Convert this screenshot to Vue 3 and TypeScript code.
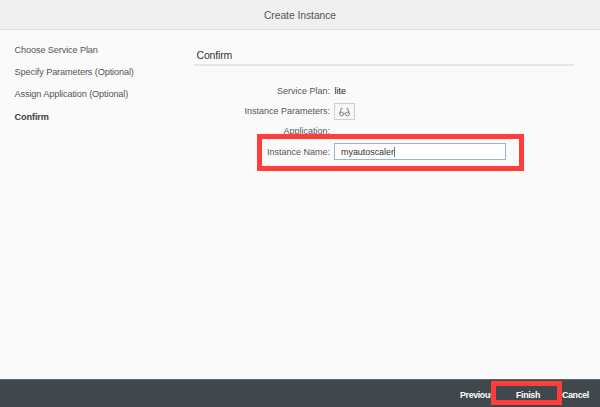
<script setup lang="ts">
import { ref } from 'vue'

interface Step {
  label: string
  active?: boolean
}

const steps: Step[] = [
  { label: 'Choose Service Plan' },
  { label: 'Specify Parameters (Optional)' },
  { label: 'Assign Application (Optional)' },
  { label: 'Confirm', active: true },
]
const instanceName = ref('myautoscaler')
</script>

<template>
  <div class="dialog">
    <header class="header">Create Instance</header>
    <div class="body">
      <nav class="steps">
        <div v-for="step in steps" :key="step.label" class="step" :class="{ active: step.active }">
          {{ step.label }}
        </div>
      </nav>
      <main class="content">
        <h2 class="title">Confirm</h2>
        <div class="form">
          <div class="row">
            <span class="label">Service Plan:</span>
            <span class="value">lite</span>
          </div>
          <div class="row">
            <span class="label">Instance Parameters:</span>
            <button class="view" aria-label="View parameters">
              <svg width="11" height="10" viewBox="0 0 11 10" fill="none" stroke="#777" stroke-width="0.9">
                <circle cx="2.6" cy="7" r="1.9" />
                <circle cx="8.4" cy="7" r="1.9" />
                <path d="M4.4 6.7Q5.5 6 6.6 6.7M0.8 6.4L2.1 1.5Q2.7 0.9 3.7 1.8M10.2 6.4L8.9 1.5Q8.3 0.9 7.3 1.8" />
              </svg>
            </button>
          </div>
          <div class="row application">
            <span class="label">Application:</span>
          </div>
          <div class="row name">
            <span class="label">Instance Name:</span>
            <div class="input"><span>{{ instanceName }}</span><i class="caret"></i></div>
            <div class="mark mark-name"></div>
          </div>
        </div>
      </main>
    </div>
    <footer class="footer">
      <span class="action previous">Previous</span>
      <span class="action finish">Finish<i class="mark mark-finish"></i></span>
      <span class="action cancel">Cancel</span>
    </footer>
  </div>
</template>

<style>
body {
  background: #fafafa;
}
</style>

<style scoped>
.dialog {
  box-sizing: border-box;
  width: 600px;
  height: 407px;
  display: flex;
  flex-direction: column;
  overflow: hidden;
  background: #fafafa;
  color: #555;
  font: 9px/12px "Liberation Sans", Arial, sans-serif;
}
.header {
  box-sizing: border-box;
  height: 30px;
  flex: none;
  background: #f0f0f0;
  border-bottom: 1px solid #dfdfdf;
  text-align: center;
  font-size: 10.3px;
  line-height: 31px;
  letter-spacing: -0.04px;
}
.body {
  flex: 1;
  display: flex;
}
.steps {
  width: 194px;
  box-sizing: border-box;
  padding: 9px 0 0 14.5px;
  font-size: 9.2px;
  letter-spacing: -0.13px;
}
.step {
  height: 22.2px;
  line-height: 22px;
  white-space: nowrap;
}
.active {
  font-weight: bold;
  color: #444;
}
.content {
  width: 380px;
}
.title {
  box-sizing: border-box;
  margin: 0;
  height: 36px;
  padding: 14px 0 0 2.5px;
  border-bottom: 2px solid #e5e5e5;
  font-size: 10.5px;
  line-height: 22px;
  font-weight: normal;
  letter-spacing: -0.16px;
  color: #333;
}
.form {
  padding-top: 15px;
}
.row {
  position: relative;
  height: 20px;
  display: flex;
  align-items: center;
}
.label {
  width: 136px;
  margin-right: 4.5px;
  text-align: right;
  white-space: nowrap;
}
.value {
  color: #222;
}
.view {
  box-sizing: border-box;
  width: 21px;
  height: 17px;
  margin: 0 0 0 -0.5px;
  padding: 2px 0 0;
  display: flex;
  align-items: center;
  justify-content: center;
  background: #f7f7f7;
  border: 1px solid #cfcfcf;
}
.name {
  height: 21px;
}
.input {
  box-sizing: border-box;
  width: 172px;
  height: 17px;
  margin-left: -0.5px;
  padding-left: 6px;
  display: flex;
  align-items: center;
  background: #fff;
  border: 1px solid #9bb4d6;
  color: #333;
  letter-spacing: -0.05px;
}
.caret {
  width: 1px;
  height: 10px;
  background: #777;
}
.mark {
  position: absolute;
  box-sizing: border-box;
  border: 5px solid #ff3d3a;
}
.mark-name {
  left: 63px;
  top: -7px;
  width: 267px;
  height: 37px;
}
.footer {
  box-sizing: border-box;
  height: 28px;
  flex: none;
  display: flex;
  background: #3f484c;
  border-top: 1px solid #59676b;
  color: #fff;
  font-size: 8.8px;
  font-weight: bold;
  letter-spacing: -0.33px;
  line-height: 31px;
}
.action {
  white-space: nowrap;
}
.previous {
  width: 31px;
  padding-left: 460px;
}
.finish {
  position: relative;
  width: 71px;
  box-sizing: border-box;
  padding-left: 25px;
}
.mark-finish {
  left: 0;
  top: 1px;
  width: 71px;
  height: 24px;
}
</style>
